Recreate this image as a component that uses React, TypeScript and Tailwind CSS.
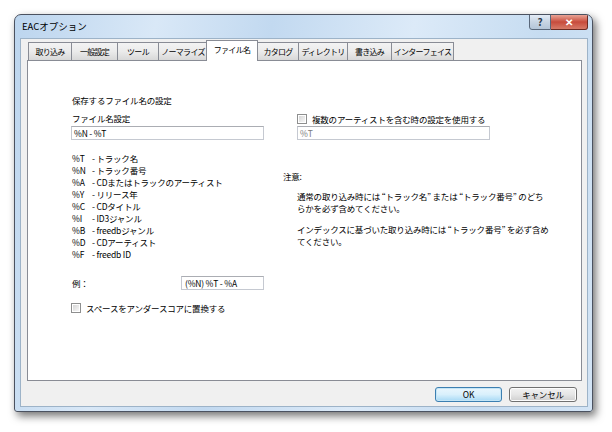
import React from "react";

const tabs = [
  { label: "取り込み", w: "w-[44px]" },
  { label: "一般設定", w: "w-[47px]" },
  { label: "ツール", w: "w-[42px]" },
  { label: "ノーマライズ", w: "w-[50px]" },
  { label: "ファイル名", w: "w-[52px]", active: true },
  { label: "カタログ", w: "w-[42px]" },
  { label: "ディレクトリ", w: "w-[50px]" },
  { label: "書き込み", w: "w-[45px]" },
  { label: "インターフェイス", w: "w-[63px]" },
];

const codes = [
  ["%T", "- トラック名"],
  ["%N", "- トラック番号"],
  ["%A", "- CDまたはトラックのアーティスト"],
  ["%Y", "- リリース年"],
  ["%C", "- CDタイトル"],
  ["%I", "- ID3ジャンル"],
  ["%B", "- freedbジャンル"],
  ["%D", "- CDアーティスト"],
  ["%F", "- freedb ID"],
];

function CheckBox() {
  return (
    <span className="w-[10px] h-[10px] border border-[#8e8f8f] bg-white p-[1px] shrink-0">
      <span className="block w-full h-full bg-gradient-to-br from-[#d6d6d6] to-[#f7f7f7]" />
    </span>
  );
}

function TextBox({ value, className, dim }: { value: string; className: string; dim?: boolean }) {
  return (
    <div
      className={`h-[14px] border border-[#c5c9d1] border-t-[#abadb3] bg-white pl-[2px] flex items-center leading-none whitespace-nowrap ${
        dim ? "text-[#7a7a7a]" : "text-black"
      } ${className}`}
    >
      {value}
    </div>
  );
}

function WinButton({ label, primary }: { label: string; primary?: boolean }) {
  return (
    <div
      className={`h-[15px] rounded-[3px] border flex items-center justify-center leading-none ${
        primary
          ? "w-[67px] border-[#3c7fb1] shadow-[inset_0_0_0_1px_#c4e5f6] bg-gradient-to-b from-[#eaf6fd] via-[#d9f0fc] to-[#a7d9f5]"
          : "w-[68px] border-[#707070] shadow-[inset_0_0_0_1px_#fcfcfc] bg-gradient-to-b from-[#f2f2f2] via-[#e6e6e6] to-[#cfcfcf]"
      }`}
    >
      {label}
    </div>
  );
}

export default function App() {
  return (
    <div className="w-[612px] h-[432px] bg-white pl-[14px] pt-[14px] font-['Noto_Sans_CJK_JP',sans-serif] text-[8.5px] leading-[12px] tracking-[-0.2px] text-black">
      {/* ウィンドウ */}
      <div className="w-[579px] h-[398px] rounded-t-[7px] rounded-b-[3px] border border-[#4b5260] shadow-[3px_4px_9px_rgba(0,0,0,0.55)] bg-[linear-gradient(100deg,#bcd5ee_0%,#d9e8f7_22%,#c2d9f0_40%,#dceaf8_62%,#c6dcf1_82%,#d3e4f5_100%)] flex flex-col overflow-hidden">
        {/* タイトルバー */}
        <div className="h-[23px] flex items-start justify-between shrink-0">
          <span className="pl-[7px] pt-[4px] text-[9.5px] leading-[14px] tracking-normal text-black">EACオプション</span>
          <div className="flex mr-[4px] -mt-px">
            <div className="w-[22px] h-[16px] rounded-bl-[3px] border border-[#59677a] bg-gradient-to-b from-[#e3ebf5] via-[#c7d4e3] to-[#b4c5d8] flex items-center justify-center text-[10px] leading-none text-[#2c3a4a] font-bold">
              ?
            </div>
            <div className="w-[37px] h-[16px] rounded-br-[3px] border border-l-0 border-[#6b2a22] bg-gradient-to-b from-[#e8a396] via-[#c74b3c] to-[#d77a68] flex items-center justify-center text-white text-[10px] font-bold leading-none">
              ✕
            </div>
          </div>
        </div>

        {/* 本体 */}
        <div className="ml-[5px] mr-[4px] mb-[4px] h-[369px] bg-[#f0f0f0] border border-[#9db3c8] pl-[6px] pr-[5px] pt-[1px] flex flex-col">
          {/* タブ */}
          <div className="h-[21px] flex items-end pl-[1px] relative z-10 text-[8px] tracking-[-0.7px] whitespace-nowrap">
            {tabs.map((t) =>
              t.active ? (
                <div
                  key={t.label}
                  className={`${t.w} h-[21px] -mx-[1px] border border-b-0 border-[#898c95] bg-white flex items-start justify-center pt-[3px] z-10`}
                >
                  {t.label}
                </div>
              ) : (
                <div
                  key={t.label}
                  className={`${t.w} h-[19px] -mr-px border border-[#898c95] bg-gradient-to-b from-[#f3f3f3] via-[#ebebeb] to-[#d8d8d8] flex items-center justify-center`}
                >
                  {t.label}
                </div>
              )
            )}
          </div>

          {/* タブパネル */}
          <div className="-mt-px h-[321px] border border-[#898c95] bg-white pl-[43px] pt-[33px] whitespace-nowrap">
            {/* 上段 */}
            <div className="flex items-end">
              <div className="w-[193px] flex flex-col">
                <span className="pl-px">保存するファイル名の設定</span>
                <span className="pl-px mt-[6px]">ファイル名設定</span>
                <TextBox value="%N - %T" className="mt-[2px] w-[193px]" />
              </div>
              <div className="ml-[33px] flex flex-col">
                <div className="flex items-center gap-[5px]">
                  <CheckBox />
                  <span>複数のアーティストを含む時の設定を使用する</span>
                </div>
                <TextBox value="%T" dim className="mt-px w-[193px]" />
              </div>
            </div>

            {/* 下段 */}
            <div className="flex mt-[12px]">
              <div className="w-[212px] flex flex-col">
                {codes.map(([c, d]) => (
                  <div key={c} className="flex pl-px">
                    <span className="w-[20px]">{c}</span>
                    <span>{d}</span>
                  </div>
                ))}
                <div className="flex items-center mt-[16px]">
                  <span className="w-[110px] pl-px">例：</span>
                  <TextBox value="(%N) %T - %A" className="w-[83px] pl-[3px]" />
                </div>
                <div className="flex items-center gap-[5px] mt-[12px]">
                  <CheckBox />
                  <span>スペースをアンダースコアに置換する</span>
                </div>
              </div>
              <div className="flex flex-col pt-[18px]">
                <span>注意:</span>
                <p className="pl-[14px] mt-[8px]">
                  通常の取り込み時には “トラック名” または “トラック番号” のどち
                  <br />
                  らかを必ず含めてください。
                </p>
                <p className="pl-[14px] mt-[9px]">
                  インデックスに基づいた取り込み時には “トラック番号” を必ず含め
                  <br />
                  てください。
                </p>
              </div>
            </div>
          </div>

          {/* ボタン */}
          <div className="flex justify-end gap-[7px] mt-[6px] pr-[5px]">
            <WinButton label="OK" primary />
            <WinButton label="キャンセル" />
          </div>
        </div>
      </div>
    </div>
  );
}
